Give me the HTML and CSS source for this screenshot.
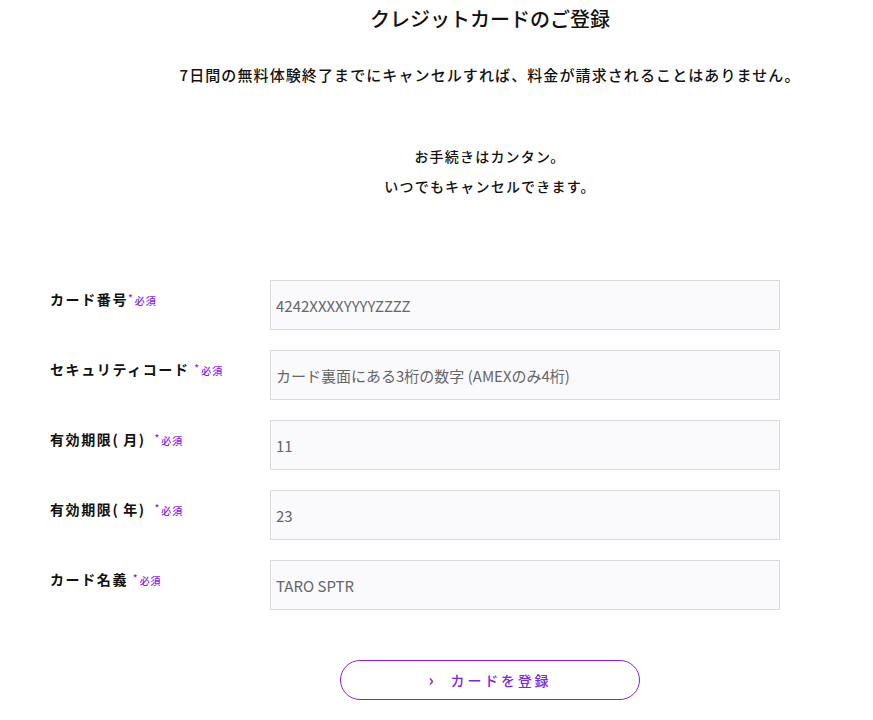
FILE: index.html
```html
<!DOCTYPE html>
<html lang="ja">
<head>
<meta charset="utf-8">
<title>クレジットカードのご登録</title>
<link rel="stylesheet" href="styles.css">
</head>
<body>
<header class="intro">
  <h1 class="title">クレジットカードのご登録</h1>
  <p class="lead">7日間の無料体験終了までにキャンセルすれば、料金が請求されることはありません。</p>
  <p class="note">お手続きはカンタン。<br>いつでもキャンセルできます。</p>
</header>
<form class="form">
  <div class="row">
    <label class="label">カード番号<span class="req"><span class="ast">*</span>必須</span></label>
    <div class="field">4242XXXXYYYYZZZZ</div>
  </div>
  <div class="row">
    <label class="label">セキュリティコード <span class="req"><span class="ast">*</span>必須</span></label>
    <div class="field">カード裏面にある3桁の数字 (AMEXのみ4桁)</div>
  </div>
  <div class="row">
    <label class="label">有効期限<span class="paren">(</span>月<span class="paren">)</span> <span class="req"><span class="ast">*</span>必須</span></label>
    <div class="field">11</div>
  </div>
  <div class="row">
    <label class="label">有効期限<span class="paren">(</span>年<span class="paren">)</span> <span class="req"><span class="ast">*</span>必須</span></label>
    <div class="field">23</div>
  </div>
  <div class="row">
    <label class="label">カード名義 <span class="req"><span class="ast">*</span>必須</span></label>
    <div class="field">TARO SPTR</div>
  </div>
</form>
<div class="actions">
  <button class="submit" type="button"><span class="chev">›</span>カードを登録</button>
</div>
</body>
</html>
```
FILE: styles.css
```css
body {
  margin: 0;
  font-family: "Noto Sans CJK JP", "Noto Sans", sans-serif;
  color: #111;
  background: #fff;
}
.intro {
  margin-left: 100px;
  width: 780px;
  text-align: center;
}
.title {
  margin: 4px 0 0;
  font-size: 20px;
  line-height: 30px;
  font-weight: 500;
}
.lead {
  margin: 29px 0 0;
  font-size: 15px;
  line-height: 24px;
  letter-spacing: 1.1px;
  font-weight: 500;
}
.note {
  margin: 54px 0 0;
  font-size: 14px;
  line-height: 30px;
  letter-spacing: 1.2px;
  font-weight: 500;
}
.form {
  margin: 79px 0 0 50px;
  display: flex;
  flex-direction: column;
  gap: 20px;
}
.row {
  display: flex;
  height: 50px;
}
.label {
  width: 220px;
  padding-top: 9px;
  font-size: 14px;
  line-height: 20px;
  font-weight: 700;
  letter-spacing: 1.6px;
  box-sizing: border-box;
}
.paren {
  letter-spacing: 5.5px;
}
.req {
  font-size: 10px;
  color: #7f25e3;
  font-weight: 500;
  letter-spacing: 1px;
}
.ast {
  position: relative;
  top: -3px;
  margin-right: 1px;
}
.field {
  width: 510px;
  height: 50px;
  box-sizing: border-box;
  border: 1px solid #dadada;
  background: #fafafc;
  padding: 0 6px 0 5px;
  display: flex;
  align-items: center;
  font-size: 15px;
  color: #666;
}
.actions {
  margin: 50px 0 0 100px;
  width: 780px;
  display: flex;
  justify-content: center;
}
.submit {
  width: 300px;
  height: 40px;
  border: 1px solid #7f25e3;
  border-radius: 20px;
  background: #fff;
  color: #7f25e3;
  font-family: "Noto Sans CJK JP", "Noto Sans", sans-serif;
  font-size: 14px;
  font-weight: 500;
  letter-spacing: 2.8px;
  display: flex;
  align-items: center;
  justify-content: center;
  padding: 0;
}
.chev {
  font-size: 16px;
  font-weight: 700;
  margin-right: 14px;
  position: relative;
  top: -1px;
}
```
